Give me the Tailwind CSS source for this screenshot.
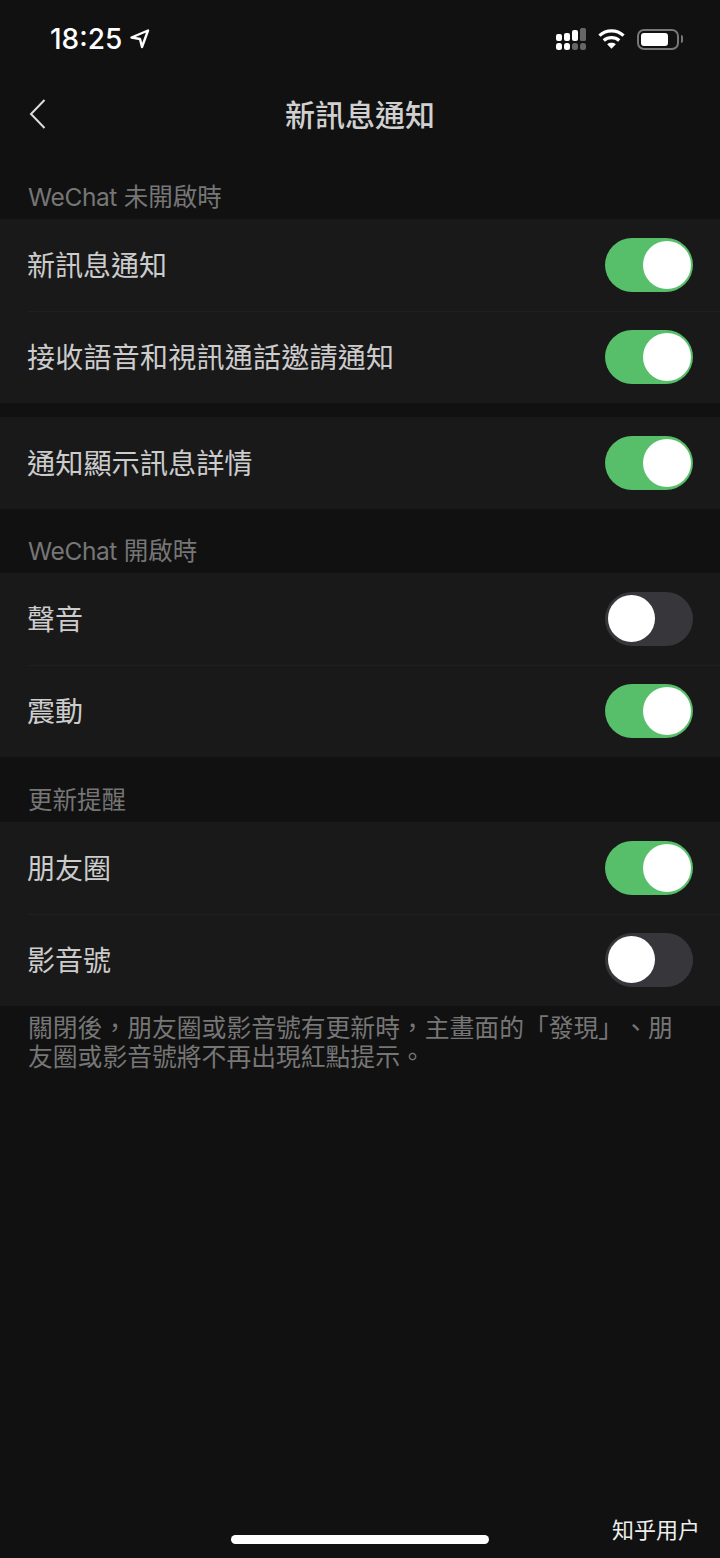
<!DOCTYPE html>
<html lang="zh-Hant">

<head>
    <meta charset="UTF-8" />
    <title>新訊息通知</title>
    <meta name="viewport" content="width=device-width, initial-scale=1.0" />
    <script src="https://cdn.jsdelivr.net/npm/@tailwindcss/browser@4"></script>
</head>

<body class="bg-[#111111] font-['Inter','Noto_Sans_CJK_TC',sans-serif]">
    <div class="relative w-[720px] h-[1558px] overflow-hidden flex flex-col">

        <!-- Status bar -->
        <div class="h-[78px] flex items-center justify-between pl-[50px] pr-[37px] shrink-0">
            <div class="flex items-center gap-[8px] text-white">
                <span class="text-[28px] font-medium leading-none">18:25</span>
                <svg width="20" height="20" viewBox="0 0 20 20" fill="none" stroke="white" stroke-width="2.4" stroke-linejoin="round">
                    <path d="M1.5 8.5 L18 1.5 L12 18 L10 10 Z" />
                </svg>
            </div>
            <div class="flex items-center gap-[12px]">
                <svg width="30" height="22" viewBox="0 0 30 22">
                    <rect x="0" y="6" width="6" height="7" rx="2" fill="#fff" />
                    <rect x="8" y="5" width="6" height="8" rx="2" fill="#fff" />
                    <rect x="16" y="2" width="6" height="11" rx="2" fill="#fff" />
                    <rect x="24" y="0" width="6" height="13" rx="1.500" fill="#666" />
                    <rect x="0" y="15" width="6" height="7" rx="2.500" fill="#fff" />
                    <rect x="8" y="15" width="6" height="7" rx="2.500" fill="#fff" />
                    <rect x="16" y="15" width="6" height="7" rx="2.500" fill="#666" />
                    <rect x="24" y="15" width="6" height="7" rx="2.500" fill="#666" />
                </svg>
                <svg width="27" height="22" viewBox="0 0 28 22" fill="none" stroke="white" stroke-width="3.4">
                    <path d="M1.5 7.5 C8.5 1 19.5 1 26.5 7.5" />
                    <path d="M6 12.5 C10.500 8.500 17.500 8.500 22 12.5" />
                    <path d="M14 21 L9.500 16.500 C12 14.500 16 14.500 18.500 16.500 Z" fill="white" stroke="none" />
                </svg>
                <div class="flex items-center gap-[2px]">
                    <div class="w-[42px] h-[21px] rounded-[7px] border-2 border-[#777777] p-[2px]">
                        <div class="w-[27px] h-full rounded-[3px] bg-white"></div>
                    </div>
                    <div class="w-[2px] h-[8px] rounded-r bg-[#777777]"></div>
                </div>
            </div>
        </div>

        <!-- Nav bar -->
        <div class="relative h-[76px] pb-[2px] flex items-center justify-center shrink-0">
            <svg class="absolute left-[29px] top-[20px]" width="20" height="32" viewBox="0 0 20 32" fill="none" stroke="#dddddd" stroke-width="2">
                <path d="M15.500 2 L2 16 L15.500 30" />
            </svg>
            <span class="text-[30px] font-medium text-[#d0d0d0] leading-none">新訊息通知</span>
        </div>

        <!-- Section: not open -->
        <div class="h-[65px] flex items-end pl-[28px] pb-[6px] text-[24.500px] leading-[32px] text-[#767676] shrink-0"><span class="tracking-[-0.4px]">WeChat</span>&nbsp;未開啟時</div>
        <div class="bg-[#191919]">
            <div class="h-[92px] pl-[27px] pr-[27px] flex items-center justify-between">
                <span class="mt-[2px] text-[28px] text-[#cccccc]">新訊息通知</span>
                <div class="relative w-[88px] h-[54px] rounded-full bg-[#57bf6a]">
                    <div class="absolute right-[2px] top-[3px] w-[48px] h-[48px] rounded-full bg-white"></div>
                </div>
            </div>
            <div class="ml-[27px] h-px -mb-px bg-[#1f1f1f]"></div>
            <div class="h-[92px] pl-[27px] pr-[27px] flex items-center justify-between">
                <span class="mt-[2px] text-[28px] tracking-[0.25px] text-[#cccccc]">接收語音和視訊通話邀請通知</span>
                <div class="relative w-[88px] h-[54px] rounded-full bg-[#57bf6a]">
                    <div class="absolute right-[2px] top-[3px] w-[48px] h-[48px] rounded-full bg-white"></div>
                </div>
            </div>
        </div>

        <div class="h-[14px] shrink-0"></div>
        <div class="bg-[#191919]">
            <div class="h-[92px] pl-[27px] pr-[27px] flex items-center justify-between">
                <span class="mt-[2px] text-[28.200px] text-[#cccccc]">通知顯示訊息詳情</span>
                <div class="relative w-[88px] h-[54px] rounded-full bg-[#57bf6a]">
                    <div class="absolute right-[2px] top-[3px] w-[48px] h-[48px] rounded-full bg-white"></div>
                </div>
            </div>
        </div>

        <!-- Section: open -->
        <div class="h-[64px] flex items-end pl-[28px] pb-[6px] text-[24.500px] leading-[32px] text-[#767676] shrink-0"><span class="tracking-[-0.4px]">WeChat</span>&nbsp;開啟時</div>
        <div class="bg-[#191919]">
            <div class="h-[92px] pl-[27px] pr-[27px] flex items-center justify-between">
                <span class="mt-[2px] text-[28px] text-[#cccccc]">聲音</span>
                <div class="relative w-[88px] h-[54px] rounded-full bg-[#37373b]">
                    <div class="absolute left-[3px] top-[3px] w-[47px] h-[47px] rounded-full bg-white"></div>
                </div>
            </div>
            <div class="ml-[27px] h-px -mb-px bg-[#1f1f1f]"></div>
            <div class="h-[92px] pl-[27px] pr-[27px] flex items-center justify-between">
                <span class="mt-[2px] text-[28px] text-[#cccccc]">震動</span>
                <div class="relative w-[88px] h-[54px] rounded-full bg-[#57bf6a]">
                    <div class="absolute right-[2px] top-[3px] w-[48px] h-[48px] rounded-full bg-white"></div>
                </div>
            </div>
        </div>

        <!-- Section: updates -->
        <div class="h-[65px] flex items-end pl-[28px] pb-[6px] text-[24.500px] leading-[32px] text-[#767676] shrink-0">更新提醒</div>
        <div class="bg-[#191919]">
            <div class="h-[92px] pl-[27px] pr-[27px] flex items-center justify-between">
                <span class="mt-[2px] text-[28px] text-[#cccccc]">朋友圈</span>
                <div class="relative w-[88px] h-[54px] rounded-full bg-[#57bf6a]">
                    <div class="absolute right-[2px] top-[3px] w-[48px] h-[48px] rounded-full bg-white"></div>
                </div>
            </div>
            <div class="ml-[27px] h-px -mb-px bg-[#1f1f1f]"></div>
            <div class="h-[92px] pl-[27px] pr-[27px] flex items-center justify-between">
                <span class="mt-[2px] text-[28px] text-[#cccccc]">影音號</span>
                <div class="relative w-[88px] h-[54px] rounded-full bg-[#37373b]">
                    <div class="absolute left-[3px] top-[3px] w-[47px] h-[47px] rounded-full bg-white"></div>
                </div>
            </div>
        </div>

        <p class="mt-[8px] pl-[28px] pr-[40px] text-[24.800px] leading-[29px] text-[#767676] [text-spacing-trim:space-all]">關閉後，朋友圈或影音號有更新時，主畫面的「發現」、朋友圈或影音號將不再出現紅點提示。</p>

        <!-- Home indicator and watermark -->
        <div class="absolute left-[231px] bottom-[14px] w-[258px] h-[9px] rounded-full bg-white"></div>
        <div class="absolute right-[20px] bottom-[13px] text-[22px] leading-[30px] text-[#eeeeee]">知乎用户</div>
    </div>
</body>

</html>
